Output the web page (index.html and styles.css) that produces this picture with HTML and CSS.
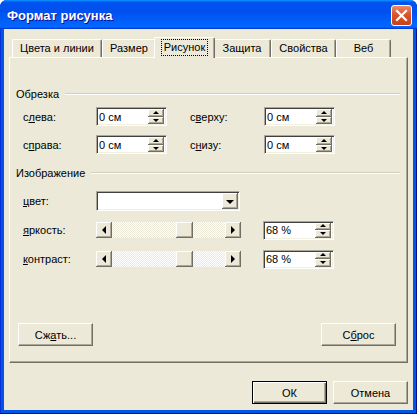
FILE: index.html
```html
<!DOCTYPE html>
<html lang="ru">
<head>
  <meta charset="UTF-8">
  <title>Формат рисунка</title>
  <link rel="stylesheet" href="styles.css">
</head>
<body>
  <div class="window">
    <div class="titlebar">
      <span class="title">Формат рисунка</span>
      <button class="close" aria-label="Закрыть">
        <svg width="13" height="13" viewBox="0 0 13 13"><path d="M2 2 L11 11 M11 2 L2 11" stroke="#fff" stroke-width="2.2" stroke-linecap="square"/></svg>
      </button>
    </div>

    <div class="client">
      <div class="tabs">
        <div class="tab">Цвета и линии</div>
        <div class="tab">Размер</div>
        <div class="tab active"><span class="focus">Рисунок</span></div>
        <div class="tab">Защита</div>
        <div class="tab">Свойства</div>
        <div class="tab">Веб</div>
      </div>

      <div class="panel">
        <div class="group-title"><span>Обрезка</span></div>
        <div class="crop-grid">
          <span class="label">с<u>л</u>ева:</span>
          <div class="spin"><span class="spin-value">0 см</span><span class="spin-btns"><span class="arrow-btn up"></span><span class="arrow-btn down"></span></span></div>
          <span class="label">с<u>в</u>ерху:</span>
          <div class="spin"><span class="spin-value">0 см</span><span class="spin-btns"><span class="arrow-btn up"></span><span class="arrow-btn down"></span></span></div>
          <span class="label">с<u>п</u>рава:</span>
          <div class="spin"><span class="spin-value">0 см</span><span class="spin-btns"><span class="arrow-btn up"></span><span class="arrow-btn down"></span></span></div>
          <span class="label">с<u>н</u>изу:</span>
          <div class="spin"><span class="spin-value">0 см</span><span class="spin-btns"><span class="arrow-btn up"></span><span class="arrow-btn down"></span></span></div>
        </div>

        <div class="group-title second"><span>Изображение</span></div>
        <div class="img-grid">
          <span class="label"><u>ц</u>вет:</span>
          <div class="combo"><span class="combo-btn"></span></div>
          <span></span>

          <span class="label"><u>я</u>ркость:</span>
          <div class="scrollbar">
            <span class="sb-btn left"></span>
            <span class="sb-track"><span class="sb-thumb" style="margin-left:64px"></span></span>
            <span class="sb-btn right"></span>
          </div>
          <div class="spin"><span class="spin-value">68 %</span><span class="spin-btns"><span class="arrow-btn up"></span><span class="arrow-btn down"></span></span></div>

          <span class="label"><u>к</u>онтраст:</span>
          <div class="scrollbar">
            <span class="sb-btn left"></span>
            <span class="sb-track"><span class="sb-thumb" style="margin-left:64px"></span></span>
            <span class="sb-btn right"></span>
          </div>
          <div class="spin"><span class="spin-value">68 %</span><span class="spin-btns"><span class="arrow-btn up"></span><span class="arrow-btn down"></span></span></div>
        </div>

        <div class="panel-actions">
          <button class="btn">Сж<u>а</u>ть...</button>
          <button class="btn">С<u>б</u>рос</button>
        </div>
      </div>

      <div class="footer">
        <button class="btn default">ОК</button>
        <button class="btn">Отмена</button>
      </div>
    </div>
  </div>
</body>
</html>
```

FILE: styles.css
```css
* { box-sizing: border-box; }
body {
  margin: 0;
  background: #fff;
  font-family: 'Liberation Sans', Arial, sans-serif;
  font-size: 11px;
  color: #000;
}
u { text-decoration: underline; text-underline-offset: 1px; }

.window {
  width: 417px;
  height: 414px;
  display: flex;
  flex-direction: column;
  background: #0055e5;
  border-radius: 7px 7px 0 0;
  box-shadow: inset -1px -1px #00138c, inset 1px 0 #0831d9;
  overflow: hidden;
}
.titlebar {
  height: 29px;
  flex: none;
  display: flex;
  justify-content: space-between;
  align-items: flex-start;
  padding: 5px 5px 0 7px;
  background: linear-gradient(180deg, #0997ff, #0053ee 8%, #0050ee 40%, #06f 88%, #06f 93%, #005bff 95%, #003dd7 96%, #003dd7);
}
.title {
  color: #fff;
  font-weight: bold;
  font-size: 13px;
  line-height: 21px;
  text-shadow: 1px 1px #0f1089;
}
.close {
  width: 21px;
  height: 21px;
  padding: 0;
  border: 1px solid #fff;
  border-radius: 3px;
  background: linear-gradient(180deg, #ec8a68, #d9542e 45%, #c7421b);
  display: flex;
  align-items: center;
  justify-content: center;
}

.client {
  flex: 1;
  margin: 0 4px 4px 4px;
  padding: 8px 5px 0;
  background: #ece9d8;
  display: flex;
  flex-direction: column;
}

.tabs {
  display: flex;
  align-items: flex-end;
  height: 20px;
  padding-left: 3px;
}
.tab {
  height: 18px;
  flex: none;
  line-height: 17px;
  text-align: center;
  border-top: 1px solid #fff;
  border-left: 1px solid #fff;
  border-right: 1px solid #716f64;
  border-radius: 2px 2px 0 0;
  box-shadow: inset -1px 0 #aca899;
  white-space: nowrap;
}
.tab:nth-child(1) { width: 90px; }
.tab:nth-child(2) { width: 54px; }
.tab:nth-child(3) { width: 57px; }
.tab:nth-child(4) { width: 58px; }
.tab:nth-child(5) { width: 65px; }
.tab:nth-child(6) { width: 55px; }
.tab.active {
  position: relative;
  z-index: 2;
  width: 61px;
  height: 21px;
  margin: 0 -2px -1px;
  padding-top: 2px;
  line-height: 15px;
  background: #ece9d8;
}
.focus {
  display: inline-block;
  padding: 0 2px;
  outline: 1px dotted #000;
}

.panel {
  position: relative;
  z-index: 1;
  height: 306px;
  display: flex;
  flex-direction: column;
  padding: 29px 7px 0 6px;
  border: 1px solid;
  border-color: #fff #716f64 #716f64 #fff;
  box-shadow: inset -1px -1px #aca899;
}

.group-title {
  display: flex;
  align-items: center;
  gap: 6px;
  height: 14px;
  line-height: 14px;
}
.group-title::after {
  content: "";
  flex: 1;
  border-top: 1px solid #d0d0bf;
  border-bottom: 1px solid #fff;
}
.group-title.second { margin-top: 12px; }

.label { display: flex; align-items: center; }

.crop-grid {
  display: grid;
  grid-template-columns: 73px 94px 74px 71px;
  grid-auto-rows: 19px;
  row-gap: 9px;
  margin: 6px 0 0 7px;
}

.img-grid {
  display: grid;
  grid-template-columns: 73px 167px 71px;
  grid-auto-rows: 20px;
  row-gap: 9px;
  align-items: center;
  margin: 11px 0 0 7px;
}

.spin, .combo {
  height: 19px;
  display: flex;
  align-items: center;
  background: #fff;
  border: 1px solid;
  border-color: #aca899 #fff #fff #aca899;
  box-shadow: inset 1px 1px #404040, inset -1px -1px #f1efe2;
}
.spin { width: 71px; }
.spin-value { padding-left: 2px; }
.spin-btns {
  margin: 1px 2px 1px auto;
  width: 16px;
  height: 15px;
  display: flex;
  flex-direction: column;
}

.arrow-btn, .combo-btn, .sb-btn, .sb-thumb {
  background: #ece9d8;
  box-shadow: inset -1px -1px #716f64, inset 1px 1px #fff, inset -2px -2px #aca899;
  display: flex;
  align-items: center;
  justify-content: center;
}
.arrow-btn { flex: 1; }
.arrow-btn::after, .combo-btn::after, .sb-btn::after {
  content: "";
  width: 0;
  height: 0;
  border: solid transparent;
}
.arrow-btn.up::after { border-width: 0 3px 3px; border-bottom-color: #000; margin-bottom: 1px; }
.arrow-btn.down::after { border-width: 3px 3px 0; border-top-color: #000; }

.combo {
  width: 144px;
  height: 20px;
}
.combo-btn {
  width: 16px;
  height: 16px;
  margin: 0 1px 0 auto;
}
.combo-btn::after { border-width: 4px 4px 0; border-top-color: #000; margin-top: 1px; }

.scrollbar {
  width: 145px;
  height: 16px;
  display: flex;
}
.sb-btn { width: 16px; height: 16px; flex: none; }
.sb-btn.left::after { border-width: 4px 4px 4px 0; border-right-color: #000; }
.sb-btn.right::after { border-width: 4px 0 4px 4px; border-left-color: #000; }
.sb-track {
  flex: 1;
  display: flex;
  background: repeating-conic-gradient(#fff 0 25%, #ece9d8 0 50%) 0 0 / 2px 2px;
}
.sb-thumb { width: 17px; height: 16px; }

.btn {
  width: 75px;
  height: 23px;
  padding: 0;
  font: inherit;
  color: #000;
  background: #ece9d8;
  border: 1px solid;
  border-color: #fff #716f64 #716f64 #fff;
  box-shadow: inset -1px -1px #aca899;
}
.btn.default {
  border-color: #000;
  box-shadow: inset 1px 1px #fff, inset -1px -1px #716f64, inset -2px -2px #aca899;
}

.panel-actions {
  margin-top: auto;
  display: flex;
  justify-content: space-between;
  padding: 0 4px 16px 2px;
}

.footer {
  margin-top: 18px;
  display: flex;
  justify-content: flex-end;
  gap: 6px;
}
```
